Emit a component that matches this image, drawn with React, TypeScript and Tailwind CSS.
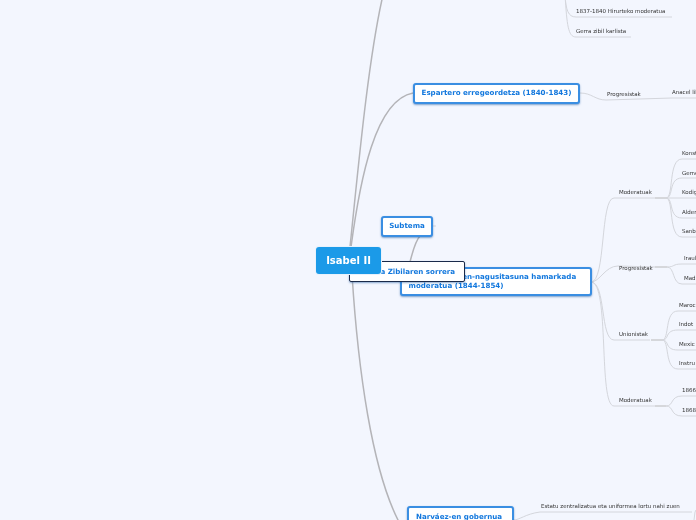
const grayThick = [
  "M350 247 C358 170 368 60 383 -5",
  "M351 247 C360 180 375 100 413 93",
  "M352 274 C358 370 372 470 399 522",
  "M410 262 C413 250 416 240 420 236",
];
const thin = [
  "M580 93 C592 93 595 100 606 100 L672 98 L696 98",
  "M591 282 C606 282 600 198 614 198 L655 198",
  "M591 282 C600 282 605 266 618 266 L655 267",
  "M591 282 C606 282 600 340 614 340 L650 340",
  "M591 282 C610 282 598 406 614 406 L655 406",
  "M666 198 C674 198 668 159 682 159 L696 159",
  "M666 198 C674 198 668 178 682 178 L696 178",
  "M666 198 L696 198",
  "M666 198 C674 198 668 218 682 218 L696 218",
  "M666 198 C674 198 668 237 682 237 L696 237",
  "M667 267 C675 267 672 264 682 264 L696 264",
  "M667 267 C675 267 672 284 682 284 L696 284",
  "M662 340 C670 340 664 311 678 311 L696 311",
  "M662 340 C670 340 664 330 678 330 L696 330",
  "M662 340 C670 340 664 350 678 350 L696 350",
  "M662 340 C670 340 664 369 678 369 L696 369",
  "M666 406 C674 406 670 396 682 396 L696 396",
  "M666 406 C674 406 670 416 682 416 L696 416",
  "M565 -5 C566 10 568 17 576 17 L672 17",
  "M565 -5 C567 25 568 37 576 37 L631 37",
  "M513 520 C520 520 525 514 540 512 L692 512",
  "M694 520 L695 512 L696 510",
  "M432 226 L436 226",
];
const labels: [string, number, number][] = [
  ["1837-1840 Hirurteko moderatua", 576, 8],
  ["Gerra zibil karlista", 576, 28],
  ["Progresistak", 607, 91],
  ["Anacel lib", 672, 89],
  ["Konst", 682, 150],
  ["Gerra", 682, 170],
  ["Moderatuak", 619, 189],
  ["Kodig", 682, 189],
  ["Alder", 682, 209],
  ["Sanb", 682, 228],
  ["Iraul", 684, 255],
  ["Progresistak", 619, 265],
  ["Madr", 684, 275],
  ["Maroc", 679, 302],
  ["Indot", 679, 321],
  ["Unionistak", 619, 331],
  ["Mexic", 679, 341],
  ["Instru", 679, 360],
  ["1866", 682, 387],
  ["Moderatuak", 619, 397],
  ["1868", 682, 407],
  ["Estatu zentralizatua eta uniformea lortu nahi zuen", 541, 503],
];
const nodeCls = "absolute bg-white border-2 border-[#3a8ee2] rounded-[3px] shadow-[0_1px_2px_rgba(30,90,160,0.55)] text-[#1177dd] font-bold text-[7.1px] flex items-center";

export default function App() {
  return (
    <div className="relative w-[696px] h-[520px] overflow-hidden bg-[#f3f6fe] font-['DejaVu_Sans',sans-serif]">
      <svg className="absolute inset-0" width="696" height="520" fill="none">
        {grayThick.map((d) => (
          <path key={d} d={d} stroke="#b4b4b8" strokeWidth="1.5" />
        ))}
        {thin.map((d) => (
          <path key={d} d={d} stroke="#d4d6dc" strokeWidth="1" />
        ))}
        <path d="M655 198 H666 M655 267 H667 M651 340 H662 M655 406 H666" stroke="#b8b8b8" strokeWidth="1" />
      </svg>
      <div className="absolute inset-0 [will-change:transform]">
        {labels.map(([t, x, y]) => (
          <div
            key={t + x + y}
            className="absolute text-[5.5px] leading-[7px] whitespace-nowrap text-[#333333]"
            style={{ left: x, top: y }}
          >
            {t}
          </div>
        ))}
      </div>
      <div className={nodeCls + " left-[413px] top-[83px] w-[167px] h-[21px] justify-center whitespace-nowrap"}>
        Espartero erregeordetza (1840-1843)
      </div>
      <div className={nodeCls + " left-[381px] top-[216px] w-[52px] h-[21px] justify-center"}>Subtema</div>
      <div className={nodeCls + " left-[400px] top-[267px] w-[192px] h-[29px] pl-[6.5px] whitespace-nowrap leading-[8.5px]"}>
        <span>
          Narváez-enaren-nagusitasuna hamarkada
          <br />
          moderatua (1844-1854)
        </span>
      </div>
      <div className="absolute left-[349px] top-[261px] w-[116px] h-[21px] bg-white border border-[#1a2a4a] rounded-[2px] shadow-[0_1px_2px_rgba(30,90,160,0.5)] text-[#1177dd] font-bold text-[7.1px] leading-[10px] flex items-center justify-end pr-[9px] whitespace-nowrap">
        Gerla Zibilaren sorrera
      </div>
      <div className={nodeCls + " left-[407px] top-[506px] w-[107px] h-[30px] pl-[7px] items-start pt-[4px] whitespace-nowrap"}>
        Narváez-en gobernua
      </div>
      <div className="absolute left-[316px] top-[247px] w-[65px] h-[27px] rounded-[3px] bg-[#1b9ae8] ring-1 ring-[#e8f2fc] text-white font-bold text-[10px] flex items-center justify-center">
        Isabel II
      </div>
    </div>
  );
}
